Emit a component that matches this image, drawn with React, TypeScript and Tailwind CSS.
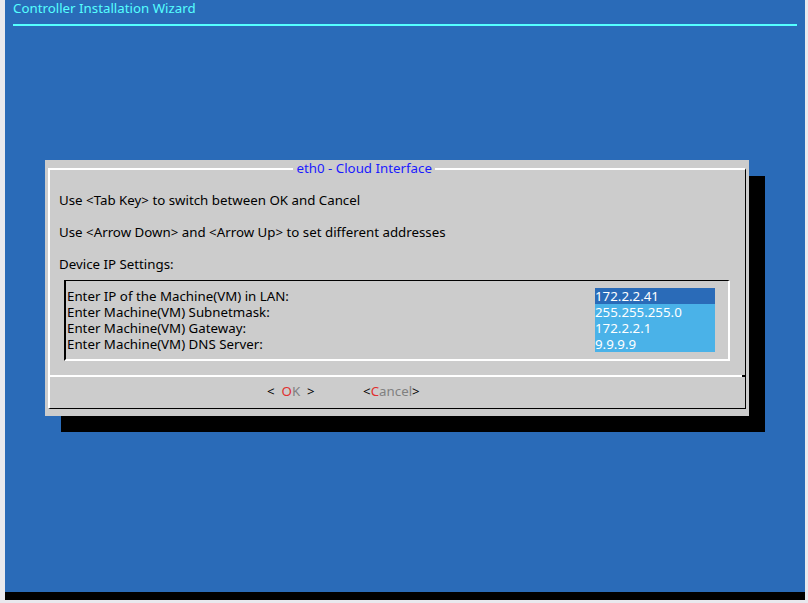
export default function App() {
  const font = "font-['DejaVu_Sans_Mono'] text-[13.3px] leading-[16px] whitespace-pre";
  const rows = [
    ["Enter IP of the Machine(VM) in LAN:", "172.2.2.41", true],
    ["Enter Machine(VM) Subnetmask:", "255.255.255.0", false],
    ["Enter Machine(VM) Gateway:", "172.2.2.1", false],
    ["Enter Machine(VM) DNS Server:", "9.9.9.9", false],
  ] as const;
  return (
    <div className={`w-[808px] h-[603px] bg-[#e9e9ee] pl-[5px] ${font}`}>
      <div className="w-[800px] h-[593px] bg-[#2a6bb8] flex flex-col">
        <div className="h-[16px] pl-[8px] text-[#55ffff]">Controller Installation Wizard</div>
        <div className="mt-[8px] mx-[8px] h-[2px] bg-[#55ffff]" />
        <div className="relative mt-[134px] ml-[40px] w-[704px] h-[256px] bg-[#cccccc] shadow-[16px_16px_0_#000] pt-[8px] pl-[3px] pr-[3px] pb-[7px]">
          <div className="absolute left-[248px] top-0 h-[16px] bg-[#cccccc] text-[#1a1aff]"> eth0 - Cloud Interface </div>
          <div className="h-full border-t-2 border-l-2 border-white border-r border-b border-r-black border-b-black text-black flex flex-col">
            <div className="mt-[22px] pl-[9px] h-[16px]">Use &lt;Tab Key&gt; to switch between OK and Cancel</div>
            <div className="mt-[16px] pl-[9px] h-[16px]">Use &lt;Arrow Down&gt; and &lt;Arrow Up&gt; to set different addresses</div>
            <div className="mt-[16px] pl-[9px] h-[16px]">Device IP Settings:</div>
            <div className="mt-[8px] ml-[14px] w-[666px] border-t border-l-2 border-black border-r-2 border-b-2 border-r-white border-b-white pt-[7px] pb-[7px] pl-[1px]">
              {rows.map(([l, v, sel]) => (
                <div key={l} className="flex h-[16px]">
                  <div className="w-[528px]">{l}</div>
                  <div className={`w-[120px] text-white ${sel ? "bg-[#2a6bb8]" : "bg-[#4ab2e8]"}`}>{v}</div>
                </div>
              ))}
            </div>
            <div className="mt-[14px] flex h-[2px]">
              <div className="flex-1 bg-white" />
              <div className="w-[3px] bg-black" />
            </div>
            <div className="mt-[6px] pl-[217px] h-[16px] flex">
              <span>&lt;  </span><span className="text-[#e03030]">O</span><span className="text-[#808080]">K</span><span>  &gt;</span>
              <span>{"              "}&lt;</span><span className="text-[#e03030]">C</span><span className="text-[#808080]">ancel</span><span>&gt;</span>
            </div>
          </div>
        </div>
      </div>
      <div className="w-[800px] h-[8px] bg-black -mt-px" />
    </div>
  );
}
